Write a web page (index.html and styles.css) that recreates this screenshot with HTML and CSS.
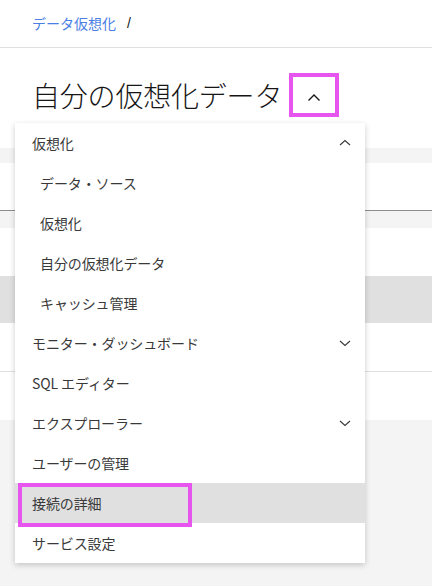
FILE: index.html
```html
<!DOCTYPE html>
<html lang="ja">
<head>
<meta charset="utf-8">
<link rel="stylesheet" href="styles.css">
</head>
<body>
<div class="page">
  <header class="top">
    <nav class="crumbs"><a class="crumb-link">データ仮想化</a><span class="crumb-sep">/</span></nav>
  </header>
  <div class="title-row">
    <h1 class="title">自分の仮想化データ</h1>
    <span class="title-toggle">
      <svg width="14" height="9" viewBox="0 0 14 9"><path d="M1.5 7.5 L7 2 L12.5 7.5" fill="none" stroke="#161616" stroke-width="1.4"/></svg>
    </span>
  </div>
  <div class="content">
    <div class="band"></div>
    <div class="row row-input"></div>
    <div class="band"></div>
    <div class="row"></div>
    <div class="row row-selected"></div>
    <div class="row row-line"></div>
    <div class="row"></div>
  </div>

  <ul class="menu">
    <li class="item"><span>仮想化</span>
      <svg class="chev" width="12" height="8" viewBox="0 0 12 8"><path d="M1 6 L6 1.5 L11 6" fill="none" stroke="#393939" stroke-width="1.1"/></svg></li>
    <li class="item sub"><span>データ・ソース</span></li>
    <li class="item sub"><span>仮想化</span></li>
    <li class="item sub"><span>自分の仮想化データ</span></li>
    <li class="item sub"><span>キャッシュ管理</span></li>
    <li class="item"><span>モニター・ダッシュボード</span>
      <svg class="chev" width="12" height="8" viewBox="0 0 12 8"><path d="M1 2 L6 6.5 L11 2" fill="none" stroke="#393939" stroke-width="1.1"/></svg></li>
    <li class="item"><span>SQL エディター</span></li>
    <li class="item"><span>エクスプローラー</span>
      <svg class="chev" width="12" height="8" viewBox="0 0 12 8"><path d="M1 2 L6 6.5 L11 2" fill="none" stroke="#393939" stroke-width="1.1"/></svg></li>
    <li class="item"><span>ユーザーの管理</span></li>
    <li class="item active"><span>接続の詳細</span><i class="mark"></i></li>
    <li class="item"><span>サービス設定</span></li>
  </ul>
</div>
</body>
</html>
```
FILE: styles.css
```css
* { box-sizing: border-box; }
html, body {
  margin: 0;
  padding: 0;
  width: 432px;
  height: 586px;
  overflow: hidden;
  background: #f4f4f4;
  font-family: "Noto Sans CJK JP", "Noto Sans", sans-serif;
  color: #161616;
}
.page {
  position: relative;
  width: 432px;
  height: 586px;
}
.top {
  background: #fff;
  height: 48px;
  border-bottom: 1px solid #e0e0e0;
  padding: 13px 0 0 32px;
}
.crumbs {
  display: flex;
  align-items: center;
  font-size: 14px;
  line-height: 20px;
}
.crumb-link { color: #4a7ee3; }
.crumb-sep { color: #161616; margin-left: 11px; font-family: "Liberation Sans", sans-serif; }
.title-row {
  background: #fff;
  height: 100px;
  display: flex;
  align-items: flex-start;
  padding: 25px 0 0 32px;
}
.title {
  margin: 0;
  font-size: 28px;
  line-height: 44px;
  font-weight: 300;
  color: #161616;
  letter-spacing: -0.2px;
}
.title-toggle {
  margin-left: 7px;
  width: 50px;
  height: 44px;
  border: 4px solid #e656ee;
  display: flex;
  align-items: center;
  justify-content: center;
  padding-top: 4px;
}
.content {
  position: absolute;
  left: 0;
  right: 0;
  top: 148px;
}
.band { height: 15px; background: #f4f4f4; }
.content .band:nth-child(3) { height: 17px; }
.row { height: 48px; background: #fff; }
.row-input { border-bottom: 1px solid #8d8d8d; }
.row-selected { height: 47px; background: #e0e0e0; }
.row-line { height: 49px; border-bottom: 1px solid #e0e0e0; }

.menu {
  position: absolute;
  left: 15px;
  top: 123px;
  width: 350px;
  margin: 0;
  padding: 0;
  list-style: none;
  background: #fff;
  box-shadow: 0 2px 6px rgba(0,0,0,0.2);
}
.item {
  position: relative;
  height: 40px;
  display: flex;
  align-items: center;
  justify-content: space-between;
  padding: 0 14px 0 17px;
  font-size: 14px;
  color: #393939;
  letter-spacing: -0.1px;
}
.item.sub { padding-left: 25px; }
.item.active { background: #e0e0e0; }
.chev { flex: none; }
.mark {
  position: absolute;
  left: 3px;
  top: 0;
  width: 174px;
  height: 44px;
  border: 4px solid #e656ee;
}
```
